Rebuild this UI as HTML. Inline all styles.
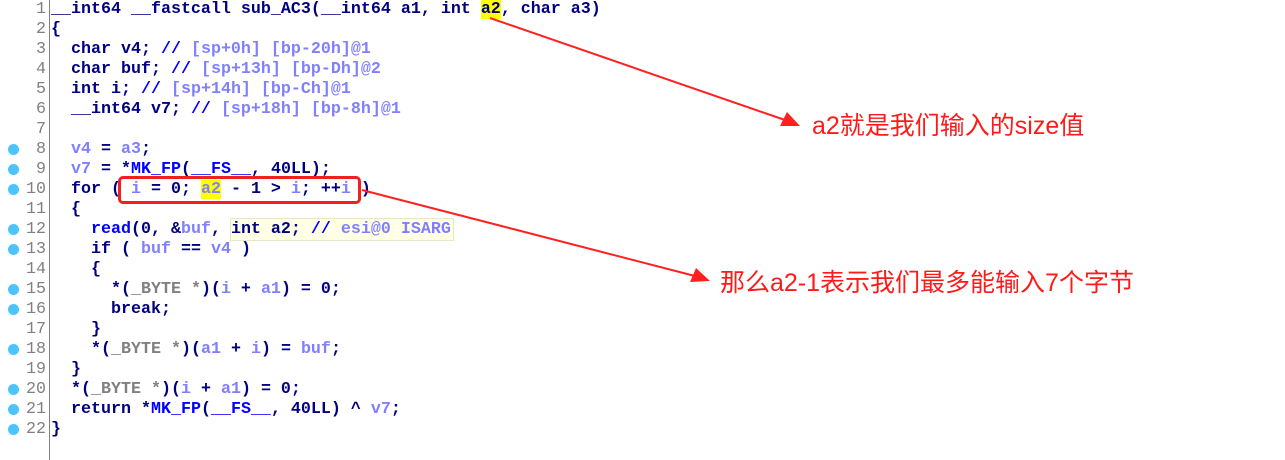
<!DOCTYPE html><html><head><style>
body{margin:0;width:1285px;height:460px;background:#fff;overflow:hidden;position:relative;font-family:"Liberation Mono",monospace;}
.g{position:absolute;left:0;top:0;width:49px;height:460px;border-right:1px solid #808080;}
.l{position:absolute;left:0;height:20px;line-height:20px;font-size:16.67px;white-space:pre;font-weight:bold;}
.n{position:absolute;left:0;width:46px;text-align:right;color:#808080;font-size:16.67px;height:20px;line-height:20px;}
.c{left:51px;color:#000080;}
.v{color:#8080ff}.k{color:#000080}.m{color:#0000ff}.gr{color:#808080}
.d{position:absolute;left:8px;width:11px;height:11px;border-radius:50%;background:#4dc3ff;}
.hl{background:#ffff00}
.t{position:absolute;color:#ff1a1a;font-family:"Liberation Sans","Noto Sans CJK SC",sans-serif;font-size:25px;line-height:30px;}
</style></head><body>
<div class="g"></div>
<div style="position:absolute;left:230px;top:218px;width:222px;height:21px;background:#ffffe6;border:1px solid #e8e8c8"></div>
<div class="n" style="top:0">1</div><div class="n" style="top:20px">2</div><div class="n" style="top:40px">3</div><div class="n" style="top:60px">4</div><div class="n" style="top:80px">5</div><div class="n" style="top:100px">6</div><div class="n" style="top:120px">7</div><div class="n" style="top:140px">8</div><div class="n" style="top:160px">9</div><div class="n" style="top:180px">10</div><div class="n" style="top:200px">11</div><div class="n" style="top:220px">12</div><div class="n" style="top:240px">13</div><div class="n" style="top:260px">14</div><div class="n" style="top:280px">15</div><div class="n" style="top:300px">16</div><div class="n" style="top:320px">17</div><div class="n" style="top:340px">18</div><div class="n" style="top:360px">19</div><div class="n" style="top:380px">20</div><div class="n" style="top:400px">21</div><div class="n" style="top:420px">22</div>
<div class="d" style="top:144px"></div><div class="d" style="top:164px"></div><div class="d" style="top:184px"></div><div class="d" style="top:224px"></div><div class="d" style="top:244px"></div><div class="d" style="top:284px"></div><div class="d" style="top:304px"></div><div class="d" style="top:344px"></div><div class="d" style="top:384px"></div><div class="d" style="top:404px"></div><div class="d" style="top:424px"></div>
<div class="l c" style="top:0">__int64 __fastcall sub_AC3(__int64 a1, int <span class="hl">a2</span>, char a3)</div>
<div class="l c" style="top:20px">{</div>
<div class="l c" style="top:40px">  char v4; <span class="m">//</span> <span class="v">[sp+0h] [bp-20h]@1</span></div>
<div class="l c" style="top:60px">  char buf; <span class="m">//</span> <span class="v">[sp+13h] [bp-Dh]@2</span></div>
<div class="l c" style="top:80px">  int i; <span class="m">//</span> <span class="v">[sp+14h] [bp-Ch]@1</span></div>
<div class="l c" style="top:100px">  __int64 v7; <span class="m">//</span> <span class="v">[sp+18h] [bp-8h]@1</span></div>
<div class="l c" style="top:140px">  <span class="v">v4</span> = <span class="v">a3</span>;</div>
<div class="l c" style="top:160px">  <span class="v">v7</span> = *<span class="m">MK_FP</span>(<span class="m">__FS__</span>, 40LL);</div>
<div class="l c" style="top:180px">  for ( <span class="v">i</span> = 0; <span class="hl v">a2</span> - 1 &gt; <span class="v">i</span>; ++<span class="v">i</span> )</div>
<div class="l c" style="top:200px">  {</div>
<div class="l c" style="top:220px">    <span class="m">read</span>(0, &amp;<span class="v">buf</span>, int a2; <span class="m">//</span> <span class="v">esi@0 ISARG</span></div>
<div class="l c" style="top:240px">    if ( <span class="v">buf</span> == <span class="v">v4</span> )</div>
<div class="l c" style="top:260px">    {</div>
<div class="l c" style="top:280px">      *(<span class="gr">_BYTE *</span>)(<span class="v">i</span> + <span class="v">a1</span>) = 0;</div>
<div class="l c" style="top:300px">      break;</div>
<div class="l c" style="top:320px">    }</div>
<div class="l c" style="top:340px">    *(<span class="gr">_BYTE *</span>)(<span class="v">a1</span> + <span class="v">i</span>) = <span class="v">buf</span>;</div>
<div class="l c" style="top:360px">  }</div>
<div class="l c" style="top:380px">  *(<span class="gr">_BYTE *</span>)(<span class="v">i</span> + <span class="v">a1</span>) = 0;</div>
<div class="l c" style="top:400px">  return *<span class="m">MK_FP</span>(<span class="m">__FS__</span>, 40LL) ^ <span class="v">v7</span>;</div>
<div class="l c" style="top:420px">}</div>
<div style="position:absolute;left:118px;top:176px;width:237px;height:22px;border:3px solid #f02020;border-radius:5px"></div>
<svg style="position:absolute;left:0;top:0" width="1285" height="460">
<line x1="490" y1="18" x2="785" y2="120" stroke="#ff2020" stroke-width="2"/>
<polygon points="800,126 780,126 787,112" fill="#ff2020"/>
<line x1="362" y1="190" x2="695" y2="276" stroke="#ff2020" stroke-width="2"/>
<polygon points="710,281 690,282 696,268" fill="#ff2020"/>
</svg>
<div class="t" style="left:812px;top:111px">a2就是我们输入的size值</div>
<div class="t" style="left:720px;top:268px">那么a2-1表示我们最多能输入7个字节</div>
</body></html>
